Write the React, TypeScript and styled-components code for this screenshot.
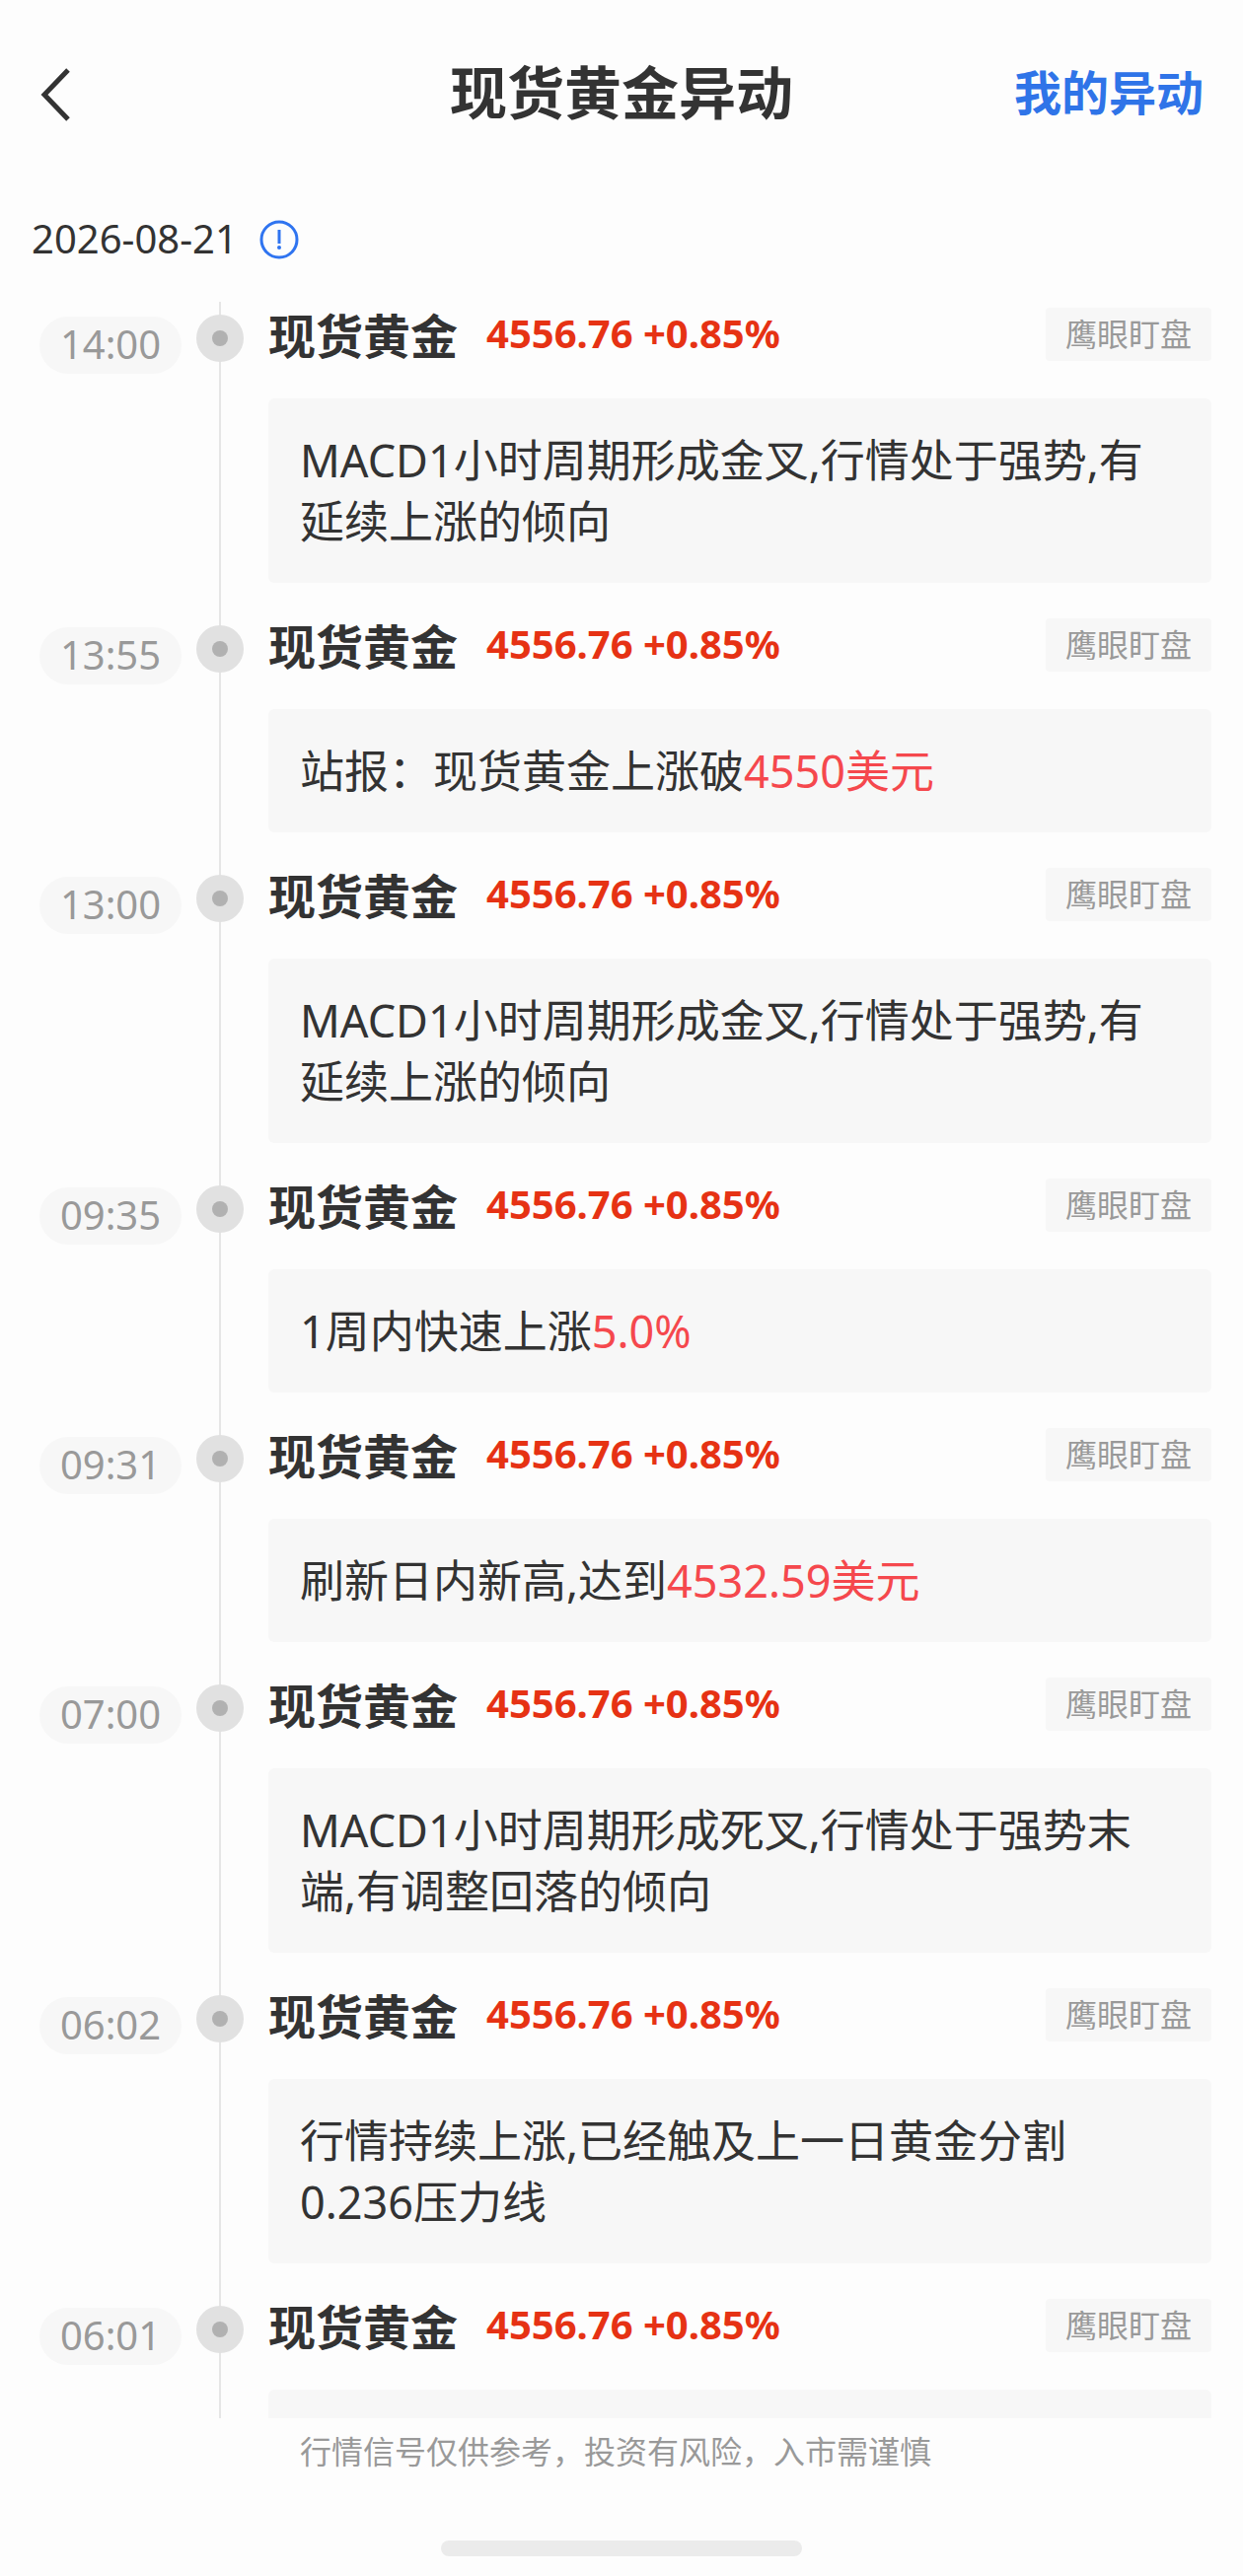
import React from 'react';
import styled, { createGlobalStyle } from 'styled-components';

const GlobalStyle = createGlobalStyle`
  * { box-sizing: border-box; }
  body {
    margin: 0;
    background: #fdfdfd;
    color: #333;
    font-family: "Noto Sans", "Noto Sans CJK SC", sans-serif;
  }
`;

const Page = styled.div`
  display: flex;
  flex-direction: column;
  height: 100vh;
`;

const Header = styled.header`
  display: grid;
  grid-template-columns: 1fr auto 1fr;
  align-items: center;
  height: 188px;
  padding: 0 40px;
`;

const BackButton = styled.button`
  display: flex;
  justify-self: start;
  padding: 4px 0 0;
  border: 0;
  background: none;
  color: #333;
  cursor: pointer;
`;

const Title = styled.h1`
  margin: 0;
  font-size: 58px;
  line-height: 72px;
  font-weight: 700;
`;

const MineLink = styled.a`
  justify-self: end;
  color: #2f74e8;
  font-size: 48px;
  line-height: 72px;
  font-weight: 700;
  text-decoration: none;
`;

const DateRow = styled.div`
  display: flex;
  align-items: center;
  gap: 22px;
  height: 108px;
  margin-bottom: 10px;
  padding: 0 32px;
  font-size: 40px;
  line-height: 56px;
`;

const InfoButton = styled.button`
  display: flex;
  padding: 2px 0 0;
  border: 0;
  background: none;
  color: #2f74f0;
  cursor: pointer;
`;

const Timeline = styled.ol`
  flex: 1;
  min-height: 0;
  margin: 0;
  padding: 0;
  overflow: hidden;
  list-style: none;
`;

const Item = styled.li`
  display: grid;
  grid-template-columns: 199px 48px 1fr;
`;

const TimePill = styled.time`
  justify-self: start;
  align-self: start;
  width: 144px;
  height: 58px;
  margin: 15px 0 0 40px;
  border-radius: 29px;
  background: #f7f7f7;
  color: #999;
  font-size: 40px;
  line-height: 56px;
  text-align: center;
`;

const Axis = styled.div`
  padding-top: 13px;
  background: linear-gradient(#e6e6e6, #e6e6e6) center / 2px 100% no-repeat;
`;

const Dot = styled.div`
  display: flex;
  align-items: center;
  justify-content: center;
  height: 48px;
  border-radius: 50%;
  background: #e1e1e1;

  &::after {
    content: "";
    width: 16px;
    height: 16px;
    border-radius: 50%;
    background: #b1b1b1;
  }
`;

const Content = styled.div`
  padding: 0 32px 30px 25px;
`;

const ItemHead = styled.div`
  display: flex;
  align-items: center;
  height: 66px;
  margin-bottom: 32px;
`;

const Name = styled.h2`
  margin: 0 29px 0 0;
  padding-top: 4px;
  font-size: 48px;
  line-height: 56px;
  font-weight: 700;
`;

const Quote = styled.span`
  padding-bottom: 2px;
  color: #e63214;
  font-size: 40px;
  line-height: 56px;
  font-weight: 700;
`;

const Tag = styled.span`
  height: 54px;
  margin-left: auto;
  padding: 0 20px;
  border-radius: 4px;
  background: #f7f7f7;
  color: #999;
  font-size: 32px;
  line-height: 54px;
`;

const Card = styled.p`
  min-height: 125px;
  margin: 0;
  padding: 32px 32px 31px;
  border-radius: 6px;
  background: #f7f7f7;
  font-size: 45px;
  line-height: 62px;
`;

const AlertText = styled.span`
  white-space: pre-line;
`;

const Highlight = styled.em`
  color: #f5484d;
  font-style: normal;
`;

const Disclaimer = styled.footer`
  padding: 8px 32px 0 304px;
  color: #999;
  font-size: 32px;
  line-height: 52px;
`;

const HomeBar = styled.div`
  width: 29%;
  height: 16px;
  margin: 64px auto 20px;
  border-radius: 8px;
  background: #ebebeb;
`;

type Alert = { time: string; text: string; highlight?: string };

const alerts: Alert[] = [
  { time: '14:00', text: 'MACD1小时周期形成金叉,行情处于强势,有延续上涨的倾向' },
  { time: '13:55', text: '站报：现货黄金上涨破', highlight: '4550美元' },
  { time: '13:00', text: 'MACD1小时周期形成金叉,行情处于强势,有延续上涨的倾向' },
  { time: '09:35', text: '1周内快速上涨', highlight: '5.0%' },
  { time: '09:31', text: '刷新日内新高,达到', highlight: '4532.59美元' },
  { time: '07:00', text: 'MACD1小时周期形成死叉,行情处于强势末端,有调整回落的倾向' },
  { time: '06:02', text: '行情持续上涨,已经触及上一日黄金分割\n0.236压力线' },
  { time: '06:01', text: '' },
];

function AlertItem({ time, text, highlight }: Alert) {
  return (
    <Item>
      <TimePill>{time}</TimePill>
      <Axis>
        <Dot />
      </Axis>
      <Content>
        <ItemHead>
          <Name>现货黄金</Name>
          <Quote>4556.76 +0.85%</Quote>
          <Tag>鹰眼盯盘</Tag>
        </ItemHead>
        <Card>
          <AlertText>{text}</AlertText>
          {highlight && <Highlight>{highlight}</Highlight>}
        </Card>
      </Content>
    </Item>
  );
}

export default function App() {
  return (
    <>
      <GlobalStyle />
      <Page>
        <Header>
          <BackButton type="button" aria-label="返回">
            <svg width="32" height="54" viewBox="0 0 32 54" fill="none" stroke="currentColor" strokeWidth="5">
              <path d="M29 2 L5 27 L29 52" />
            </svg>
          </BackButton>
          <Title>现货黄金异动</Title>
          <MineLink href="#mine">我的异动</MineLink>
        </Header>
        <DateRow>
          <time>2026-08-21</time>
          <InfoButton type="button" aria-label="说明">
            <svg width="40" height="40" viewBox="0 0 40 40" fill="none" stroke="currentColor" strokeWidth="3">
              <circle cx="20" cy="20" r="18" />
              <path d="M20 10 V24" />
              <circle cx="20" cy="28" r="2" fill="currentColor" stroke="none" />
            </svg>
          </InfoButton>
        </DateRow>
        <Timeline>
          {alerts.map((alert) => (
            <AlertItem key={alert.time} {...alert} />
          ))}
        </Timeline>
        <Disclaimer>行情信号仅供参考，投资有风险，入市需谨慎</Disclaimer>
        <HomeBar />
      </Page>
    </>
  );
}
